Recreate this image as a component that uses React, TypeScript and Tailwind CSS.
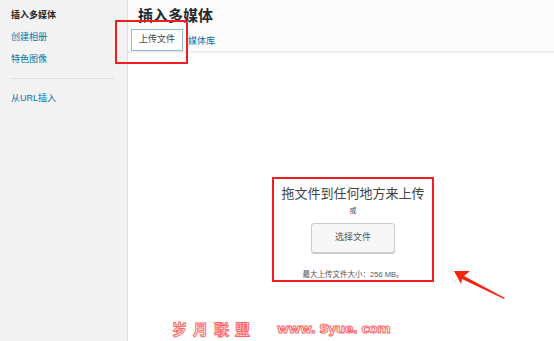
import React from "react";

const font = { fontFamily: '"Liberation Sans", "Noto Sans CJK SC", sans-serif' };

function Sidebar() {
  return (
    <div className="w-[128px] flex-none h-full bg-[#f3f3f3] border-r border-[#dddddd] pt-[9px] px-[11px] text-[9px]">
      <div className="font-bold text-[#23282d] leading-[12px]">插入多媒体</div>
      <div className="mt-[10px] text-[#0073aa] leading-[12px]">创建相册</div>
      <div className="mt-[10px] text-[#0073aa] leading-[12px]">特色图像</div>
      <div className="mt-[13px] mr-[2px] border-t border-[#dddddd]" />
      <div className="mt-[13px] text-[#0073aa] leading-[12px]">从URL插入</div>
    </div>
  );
}

function Arrow() {
  return (
    <svg width="60" height="40" viewBox="0 0 60 40" className="absolute left-[450px] top-[265px]">
      <polygon points="4,6 20,6 14,11 55,33 54,34 12,14 11,19" fill="#f5260f" />
    </svg>
  );
}

function Watermark() {
  return (
    <div
      className="absolute left-[172px] top-[319px] flex items-center font-bold text-white [-webkit-text-stroke:1px_#ff6464] whitespace-pre leading-[20px]"
      style={{ fontFamily: '"Noto Sans CJK SC", sans-serif' }}
    >
      <span className="text-[15px] tracking-[6px]">岁月联盟</span>
      <span className="ml-[21px] text-[13px] tracking-[-0.5px]" style={{ fontFamily: '"DejaVu Sans", sans-serif' }}>
        www. Syue. com
      </span>
    </div>
  );
}

export default function App() {
  return (
    <div className="relative w-[554px] h-[341px] overflow-hidden bg-white flex" style={font}>
      <Sidebar />
      <div className="flex-1 flex flex-col min-w-0">
        <div className="h-[53px] flex-none bg-[#fcfcfc] border-b-2 border-[#eeeeee] pl-[10px]">
          <div className="pt-[6px] text-[15px] font-bold text-[#23282d] leading-[20px]">插入多媒体</div>
          <div className="flex items-end mt-[3px]">
            <div className="ml-[-7px] w-[52px] h-[22px] border border-[#8fb7d6] bg-white flex items-center justify-center text-[9px] text-[#444]">
              上传文件
            </div>
            <div className="ml-[5px] mb-[4px] text-[9px] text-[#0073aa] leading-[12px]">媒体库</div>
          </div>
        </div>
        <div className="flex-1 flex flex-col items-center pt-[132px] pl-[24px] text-[#444]">
          <div className="text-[13px] leading-[18px]">拖文件到任何地方来上传</div>
          <div className="text-[7px] mt-[3px] leading-[10px]">或</div>
          <div className="mt-[7px] w-[84px] h-[30px] border border-[#cccccc] rounded-[3px] bg-[#f7f7f7] shadow-[0_1px_0_#cccccc] flex items-center justify-center text-[9px] text-[#555]">
            选择文件
          </div>
          <div className="mt-[17px] text-[7.5px] leading-[10px] text-[#555]">最大上传文件大小：256 MB。</div>
        </div>
      </div>
      <div className="absolute left-[115px] top-[20px] w-[73px] h-[44px] border-2 border-[#f01e1e]" />
      <div className="absolute left-[272px] top-[177px] w-[162px] h-[105px] border-2 border-[#f01e1e]" />
      <Arrow />
      <Watermark />
    </div>
  );
}
